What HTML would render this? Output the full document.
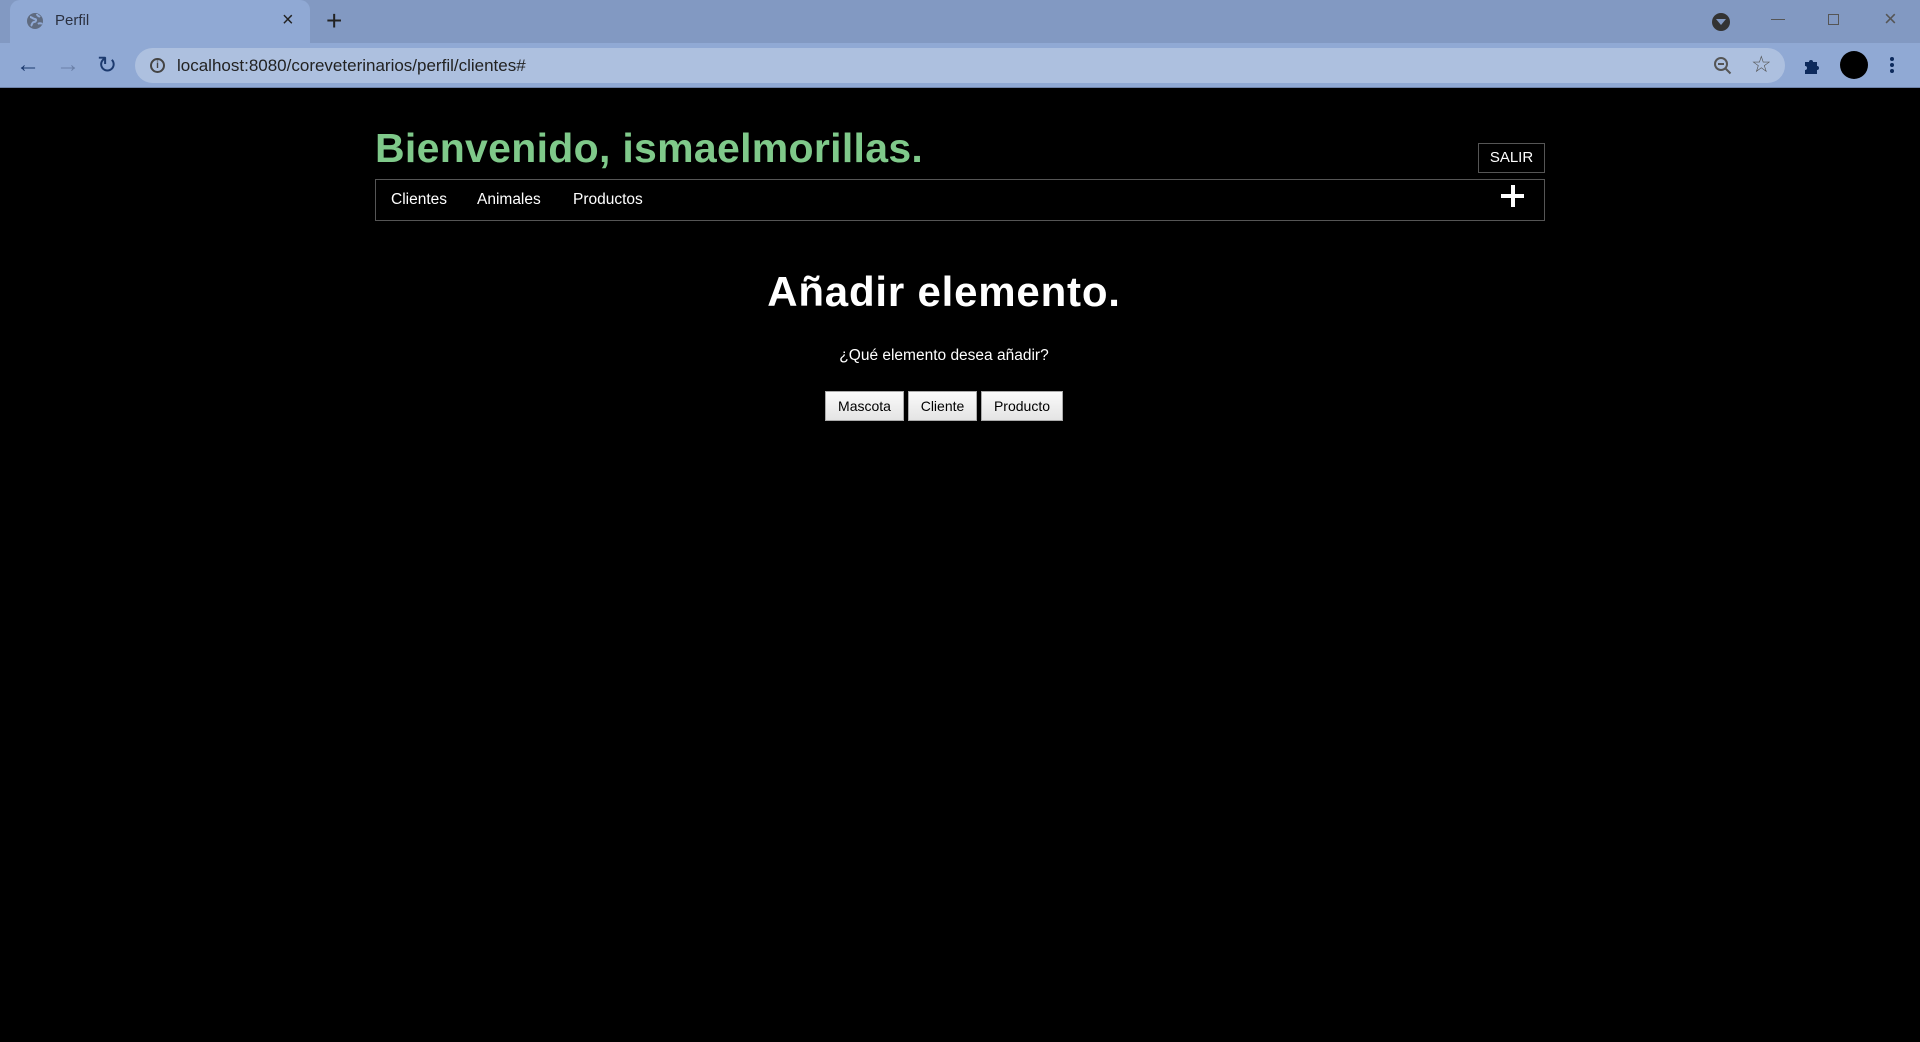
<!DOCTYPE html>
<html><head><meta charset="utf-8"><style>
*{margin:0;padding:0;box-sizing:border-box}
body{width:1920px;height:1042px;background:#000;overflow:hidden;font-family:"Liberation Sans",sans-serif;position:relative}
.a{position:absolute}
</style></head><body>
<div class="a" style="left:0;top:0;width:1920px;height:43px;background:#8299c2"></div>
<div class="a" style="left:10px;top:0;width:300px;height:44px;background:#90a9d4;border-radius:10px 10px 0 0"></div>
<svg class="a" style="left:26px;top:12px" width="18" height="18" viewBox="0 0 18 18"><circle cx="9" cy="9" r="8" fill="#5f6b80"/><path d="M4 5c2 0 3 2 5 2s1 3-1 3-2 3-3 4M11 2c0 2 2 2 3 3M12 12c1-1 3-1 4 0" stroke="#90a9d4" stroke-width="2" fill="none"/></svg>
<div class="a" style="left:55px;top:12px;font-size:15px;color:#2a3040">Perfil</div>
<div class="a" style="left:282px;top:9px;font-size:20px;color:#222">×</div>
<div class="a" style="left:326px;top:5px;font-size:28px;color:#222;font-weight:300">+</div>
<div class="a" style="left:1712px;top:13px;width:18px;height:18px;border-radius:50%;background:#333"></div>
<div class="a" style="left:1716px;top:19px;width:0;height:0;border-left:5px solid transparent;border-right:5px solid transparent;border-top:6px solid #8299c2"></div>
<div class="a" style="left:1771px;top:19px;width:14px;height:1px;background:#555"></div>
<div class="a" style="left:1828px;top:14px;width:11px;height:11px;border:1px solid #555"></div>
<div class="a" style="left:1884px;top:6px;font-size:22px;color:#555">×</div>
<div class="a" style="left:0;top:43px;width:1920px;height:45px;background:#90a9d4"></div>
<div class="a" style="left:0;top:87px;width:1920px;height:1px;background:#6e82a8"></div>
<div class="a" style="left:16px;top:51px;font-size:24px;color:#1c3a6e">←</div>
<div class="a" style="left:56px;top:51px;font-size:24px;color:#6a80a8">→</div>
<div class="a" style="left:97px;top:51px;font-size:24px;color:#1c3a6e">↻</div>
<div class="a" style="left:135px;top:48px;width:1650px;height:35px;background:#adc0df;border-radius:18px"></div>
<div class="a" style="left:150px;top:58px;width:15px;height:15px;border:2px solid #444;border-radius:50%;font-size:10px;text-align:center;line-height:11px;color:#444;font-weight:bold">i</div>
<div class="a" style="left:177px;top:56px;font-size:17px;color:#222">localhost:8080/coreveterinarios/perfil/clientes#</div>
<svg class="a" style="left:1713px;top:56px" width="20" height="20"><circle cx="8" cy="8" r="6" stroke="#555" stroke-width="2" fill="none"/><path d="M5 8h6M12.5 12.5l5 5" stroke="#555" stroke-width="2"/></svg>
<div class="a" style="left:1751px;top:51px;font-size:23px;color:#555">☆</div>
<svg class="a" style="left:1803px;top:55px" width="20" height="20"><path d="M2 7h4a2 2 0 1 1 4 0h4v4a2 2 0 1 1 0 4v4H2v-4a2 2 0 1 0 0-4z" fill="#0d2a5c"/></svg>
<div class="a" style="left:1840px;top:51px;width:28px;height:28px;border-radius:50%;background:#000"></div>
<div class="a" style="left:1890px;top:57px;width:4px;height:4px;border-radius:50%;background:#0d2a5c;box-shadow:0 6px 0 #0d2a5c,0 12px 0 #0d2a5c"></div>

<div class="a" style="left:375px;top:125px;font-size:41px;font-weight:bold;color:#7fc98a;letter-spacing:0.3px">Bienvenido, ismaelmorillas.</div>
<div class="a" style="left:1478px;top:143px;width:67px;height:30px;border:1px solid #555;color:#fff;font-size:15px;text-align:center;line-height:28px">SALIR</div>
<div class="a" style="left:375px;top:179px;width:1170px;height:42px;border:1px solid #555"></div>
<div class="a" style="left:391px;top:191px;font-size:15.5px;color:#fff">Clientes</div>
<div class="a" style="left:477px;top:191px;font-size:15.5px;color:#fff">Animales</div>
<div class="a" style="left:573px;top:191px;font-size:15.5px;color:#fff">Productos</div>
<div class="a" style="left:1501px;top:194px;width:23px;height:4px;background:#fff"></div>
<div class="a" style="left:1511px;top:185px;width:4px;height:22px;background:#fff"></div>

<div class="a" style="left:0;top:268px;width:1888px;text-align:center;font-size:42px;font-weight:bold;color:#fff;letter-spacing:0.8px">Añadir elemento.</div>
<div class="a" style="left:0;top:347px;width:1888px;text-align:center;font-size:15.5px;color:#fff">¿Qué elemento desea añadir?</div>
<div class="a" style="left:825px;top:391px;width:79px;height:30px;background:linear-gradient(#fafafa,#e4e4e4);border:1px solid #aaa;font-size:14px;text-align:center;line-height:28px;color:#000">Mascota</div>
<div class="a" style="left:908px;top:391px;width:69px;height:30px;background:linear-gradient(#fafafa,#e4e4e4);border:1px solid #aaa;font-size:14px;text-align:center;line-height:28px;color:#000">Cliente</div>
<div class="a" style="left:981px;top:391px;width:82px;height:30px;background:linear-gradient(#fafafa,#e4e4e4);border:1px solid #aaa;font-size:14px;text-align:center;line-height:28px;color:#000">Producto</div>
</body></html>
